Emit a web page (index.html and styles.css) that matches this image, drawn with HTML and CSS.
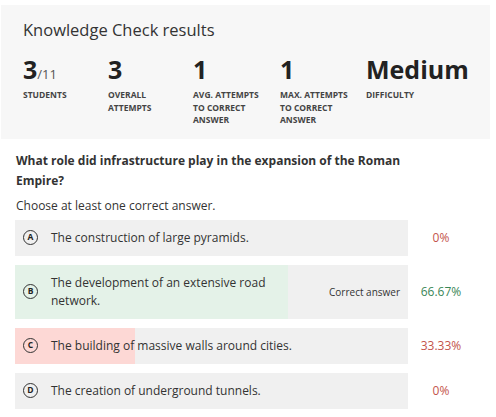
FILE: index.html
```html
<!DOCTYPE html>
<html lang="en">
<head>
    <meta charset="UTF-8">
    <meta name="viewport" content="width=device-width, initial-scale=1.0">
    <title>Knowledge Check results</title>
    <link rel="stylesheet" href="styles.css">
</head>
<body>
    <div class="summary">
        <h2 class="summary-title">Knowledge Check results</h2>
        <div class="stats">
            <div class="stat">
                <div class="stat-value">3<span class="stat-total">/11</span></div>
                <div class="stat-label">Students</div>
            </div>
            <div class="stat">
                <div class="stat-value">3</div>
                <div class="stat-label">Overall attempts</div>
            </div>
            <div class="stat">
                <div class="stat-value">1</div>
                <div class="stat-label">Avg. attempts to correct answer</div>
            </div>
            <div class="stat">
                <div class="stat-value">1</div>
                <div class="stat-label">Max. attempts to correct answer</div>
            </div>
            <div class="stat">
                <div class="stat-value">Medium</div>
                <div class="stat-label">Difficulty</div>
            </div>
        </div>
    </div>

    <div class="question">
        <p class="question-text">What role did infrastructure play in the expansion of the Roman Empire?</p>
        <p class="question-hint">Choose at least one correct answer.</p>

        <div class="answer">
            <div class="answer-box">
                <span class="letter">A</span>
                <span class="answer-text">The construction of large pyramids.</span>
            </div>
            <div class="percent wrong">0%</div>
        </div>

        <div class="answer">
            <div class="answer-box tall">
                <div class="fill correct" style="width: 69.5%"></div>
                <span class="letter">B</span>
                <span class="answer-text">The development of an extensive road network.</span>
                <span class="correct-label">Correct answer</span>
            </div>
            <div class="percent right">66.67%</div>
        </div>

        <div class="answer">
            <div class="answer-box">
                <div class="fill incorrect" style="width: 30.5%"></div>
                <span class="letter">C</span>
                <span class="answer-text">The building of massive walls around cities.</span>
            </div>
            <div class="percent wrong">33.33%</div>
        </div>

        <div class="answer">
            <div class="answer-box">
                <span class="letter">D</span>
                <span class="answer-text">The creation of underground tunnels.</span>
            </div>
            <div class="percent wrong">0%</div>
        </div>
    </div>
</body>
</html>
```

FILE: styles.css
```css
body {margin: 0; background: #ffffff; color: #333333; font-family: "Open Sans", "Noto Sans", sans-serif;}

/* summary panel */
.summary {background: #f7f7f7; margin: 5px 6px 0 1px; padding: 13px 10px 12px 22px;}
.summary-title {margin: 0; font-size: 16.5px; font-weight: 400; line-height: 24px; color: #333333;}
.stats {display: grid; grid-template-columns: 85px 85px 87px 86px auto; margin-top: 10px;}
.stat-value {font-size: 25px; font-weight: 700; line-height: 34px; color: #222222;}
.stat-total {font-size: 13px; font-weight: 400; line-height: 1; color: #555555;}
.stat-label {font-size: 8.5px; font-weight: 700; line-height: 12.5px; text-transform: uppercase; color: #444444; max-width: 74px; margin-top: 3px;}

/* question */
.question {padding: 12px 20px 0 15px;}
.question-text {margin: 0 0 0 1px; font-size: 12px; font-weight: 700; line-height: 20px; max-width: 390px; color: #333333;}
.question-hint {margin: 6px 0 5px 1px; font-size: 12px; line-height: 18px; color: #333333;}

.answer {display: flex; align-items: center; margin-bottom: 9px;}
.answer-box {position: relative; flex: 0 0 393px; height: 36px; box-sizing: border-box; display: flex; align-items: center; padding: 0 8px 0 8px; background: #f0f0f0; overflow: hidden;}
.answer-box.tall {height: 54px;}
.fill {position: absolute; left: 0; top: 0; bottom: 0;}
.fill.correct {background: #e4f2e8;}
.fill.incorrect {background: #fdd8d5;}
.letter {position: relative; width: 13px; height: 13px; border: 1.5px solid #333333; border-radius: 50%; display: flex; align-items: center; justify-content: center; font-size: 8.5px; font-weight: 700; line-height: 1; flex-shrink: 0; color: #222222;}
.answer-text {position: relative; margin-left: 13px; font-size: 12px; line-height: 18px; flex: 1;}
.correct-label {position: relative; font-size: 10px; margin-left: 24px; white-space: nowrap;}
.percent {flex: 1; text-align: center; font-size: 12px; padding-right: 2px;}
.percent.wrong {color: #c4544b;}
.percent.right {color: #3a8656;}
```
